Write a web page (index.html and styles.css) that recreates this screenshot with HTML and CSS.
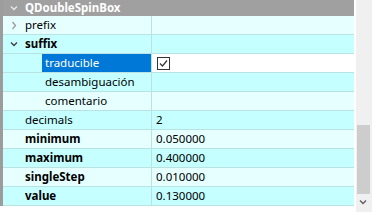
FILE: index.html
```html
<!DOCTYPE html>
<html lang="en">
<head>
    <meta charset="UTF-8">
    <title>Property Editor</title>
    <link rel="stylesheet" href="styles.css">
</head>
<body>
    <div class="editor">
        <div class="frame"></div>
        <div class="tree">
            <div class="row header">
                <span class="arrow"><svg width="8" height="6" viewBox="0 0 8 6"><path d="M1 1.5 L4 4.5 L7 1.5" fill="none" stroke="#e8e8e8" stroke-width="1.4"/></svg></span>
                <span class="name">QDoubleSpinBox</span>
            </div>
            <div class="row light">
                <div class="cell key">
                    <span class="arrow"><svg width="6" height="9" viewBox="0 0 6 9"><path d="M1.5 1 L4.5 4.5 L1.5 8" fill="none" stroke="#9a9a9a" stroke-width="1.3"/></svg></span>
                    <span class="name">prefix</span>
                </div>
                <div class="cell val"></div>
            </div>
            <div class="row strong">
                <div class="cell key">
                    <span class="arrow"><svg width="8" height="6" viewBox="0 0 8 6"><path d="M1 1.5 L4 4.5 L7 1.5" fill="none" stroke="#404040" stroke-width="1.4"/></svg></span>
                    <span class="name bold">suffix</span>
                </div>
                <div class="cell val"></div>
            </div>
            <div class="row strong">
                <div class="cell key child">
                    <span class="name selected">traducible</span>
                </div>
                <div class="cell val white">
                    <span class="check"><svg width="13" height="13" viewBox="0 0 13 13"><rect x="0.5" y="0.5" width="12" height="12" fill="#fff" stroke="#333"/><path d="M3 6.5 L5.5 9 L10 3.5" fill="none" stroke="#333" stroke-width="1.2"/></svg></span>
                </div>
            </div>
            <div class="row strong">
                <div class="cell key child"><span class="name">desambiguación</span></div>
                <div class="cell val"></div>
            </div>
            <div class="row light">
                <div class="cell key child"><span class="name">comentario</span></div>
                <div class="cell val"></div>
            </div>
            <div class="row strong">
                <div class="cell key"><span class="name">decimals</span></div>
                <div class="cell val">2</div>
            </div>
            <div class="row light">
                <div class="cell key"><span class="name bold">minimum</span></div>
                <div class="cell val">0.050000</div>
            </div>
            <div class="row strong">
                <div class="cell key"><span class="name bold">maximum</span></div>
                <div class="cell val">0.400000</div>
            </div>
            <div class="row light">
                <div class="cell key"><span class="name bold">singleStep</span></div>
                <div class="cell val">0.010000</div>
            </div>
            <div class="row strong">
                <div class="cell key"><span class="name bold">value</span></div>
                <div class="cell val">0.130000</div>
            </div>
        </div>
        <div class="gap"></div>
        <div class="scrollbar">
            <div class="thumb"></div>
            <div class="down"><svg width="8" height="6" viewBox="0 0 8 6"><path d="M1 1.5 L4 4.5 L7 1.5" fill="none" stroke="#606060" stroke-width="1.4"/></svg></div>
        </div>
    </div>
</body>
</html>
```

FILE: styles.css
```css
body {
    margin: 0;
    background-color: white;
    font-family: "Noto Sans", "Open Sans", sans-serif;
    font-size: 11.5px;
    color: black;
    overflow: hidden;
}
.editor {
    display: flex;
    width: 372px;
    height: 212px;
}
.frame {
    width: 3px;
    height: 206px;
    background-color: #9c9c9c;
}
.tree {
    width: 351px;
    display: flex;
    flex-direction: column;
}
.gap {
    width: 2px;
}
.row {
    display: flex;
    height: 18px;
    border-bottom: 1px solid #b9e3e3;
    line-height: 18px;
}
.row.header {
    height: 16px;
    line-height: 15px;
    border-bottom: none;
    background-color: #a0a0a0;
    color: white;
    font-weight: bold;
}
.row.light {
    background-color: #e6ffff;
}
.row.strong {
    background-color: #c5ffff;
}
.cell {
    display: flex;
    align-items: center;
}
.key {
    width: 148px;
    border-right: 1px solid #b9e3e3;
}
.val {
    flex: 1;
    padding-left: 4px;
}
.val.white {
    background-color: white;
}
.arrow {
    width: 22px;
    display: flex;
    justify-content: center;
    align-items: center;
}
.header .arrow {
    height: 16px;
}
.key .name {
    padding-left: 22px;
}
.key .arrow + .name {
    padding-left: 0;
}
.key.child .name {
    padding-left: 42px;
}
.key.child .name.selected {
    margin-left: 39px;
    padding-left: 3px;
    flex: 1;
    align-self: stretch;
    background-color: #0078d7;
    color: white;
}
.bold {
    font-weight: bold;
}
.check {
    display: flex;
    margin-left: 1px;
}
.scrollbar {
    width: 16px;
    height: 212px;
    background-color: #f0f0f0;
    position: relative;
}
.thumb {
    position: absolute;
    left: 1px;
    top: 125px;
    width: 13px;
    height: 69px;
    background-color: #cdcdcd;
}
.down {
    position: absolute;
    left: 3px;
    top: 199px;
    display: flex;
}
```
